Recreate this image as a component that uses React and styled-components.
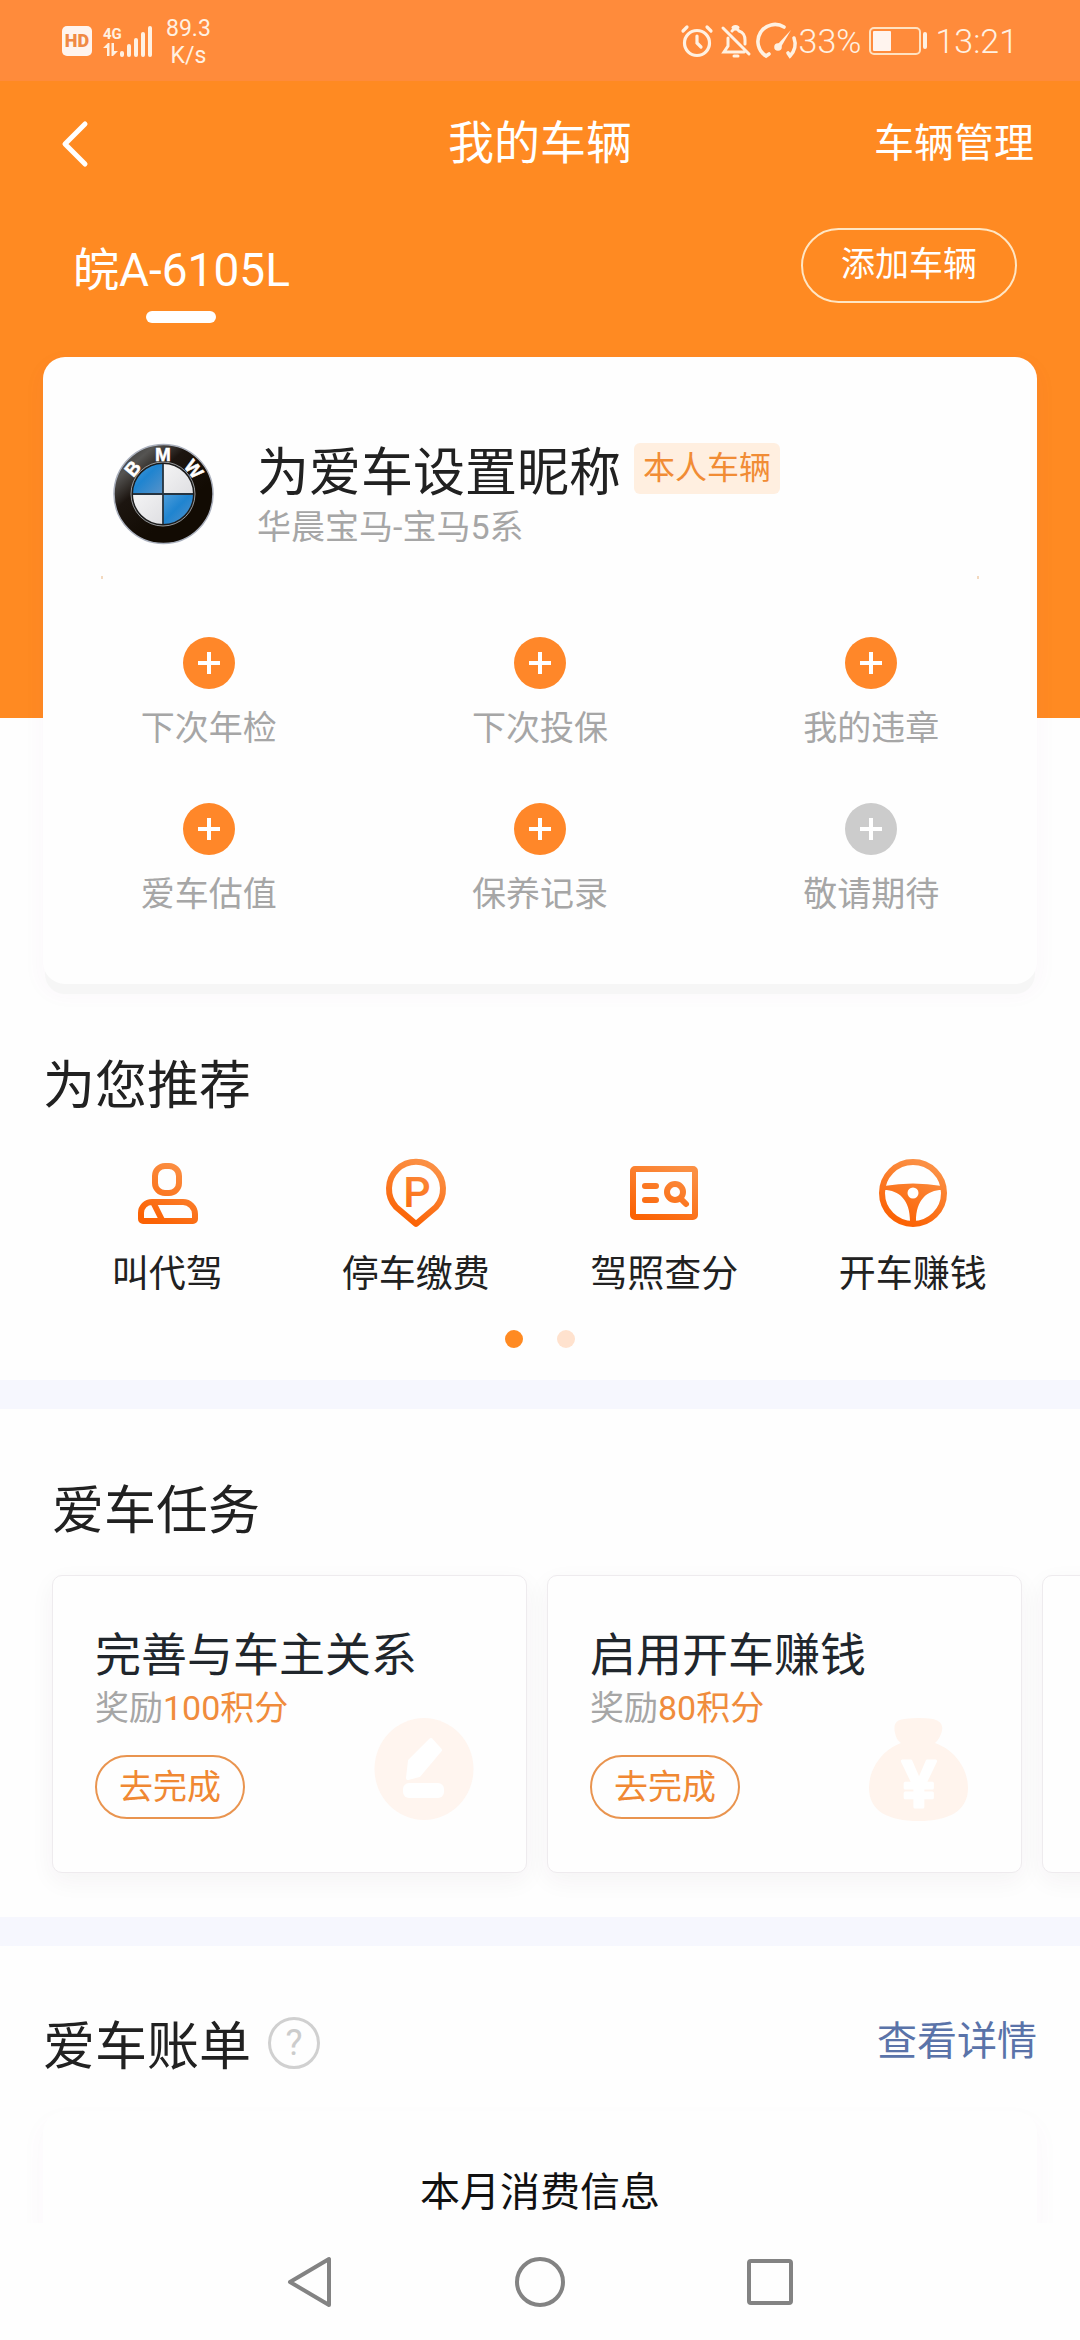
import React from 'react';
import styled, { createGlobalStyle } from 'styled-components';

const vehicleItems = [
  { label: '下次年检' },
  { label: '下次投保' },
  { label: '我的违章' },
  { label: '爱车估值' },
  { label: '保养记录' },
  { label: '敬请期待', disabled: true },
];

const services = [
  { label: '叫代驾', icon: 'driver' },
  { label: '停车缴费', icon: 'parking' },
  { label: '驾照查分', icon: 'license' },
  { label: '开车赚钱', icon: 'wheel' },
];

const tasks = [
  { title: '完善与车主关系', reward: '100积分', icon: 'edit' },
  { title: '启用开车赚钱', reward: '80积分', icon: 'money' },
];

const SignalIcon = () => (
  <svg width="52" height="34" viewBox="0 0 52 34" fill="#fff1e2">
    <text x="0" y="15" fontFamily="Roboto" fontWeight="700" fontSize="15">
      4G
    </text>
    <path d="M0 24l5-5h1.500v13H4v-8zM15 27l-5 5H8.500V19H11v8z" />
    <rect x="17" y="27" width="4" height="6" rx="2" />
    <rect x="24" y="20" width="4" height="13" rx="2" />
    <rect x="31" y="14" width="4" height="19" rx="2" />
    <rect x="38" y="8" width="4" height="25" rx="2" />
    <rect x="45" y="2" width="4" height="31" rx="2" />
  </svg>
);

const AlarmIcon = () => (
  <svg width="32" height="34" viewBox="0 0 32 34" fill="none" stroke="#fff1e2" strokeWidth="3.200" strokeLinecap="round">
    <circle cx="16" cy="19" r="12.500" />
    <path d="M16 12v7l4 4M2 7l4-4M30 7l-4-4" />
  </svg>
);

const MuteIcon = () => (
  <svg width="30" height="34" viewBox="0 0 30 34" fill="none" stroke="#fff1e2" strokeWidth="3" strokeLinecap="round">
    <path d="M2 4l26 26M7 14v8l-4 6h20" />
    <path d="M11 7a4 4 0 0 1 7 0c4 1 6 5 6 9v4M12 3.500a4 4 0 0 1 5 0" />
    <path d="M13 32h4" />
  </svg>
);

const GaugeIcon = () => (
  <svg width="40" height="36" viewBox="0 0 40 36" fill="none" stroke="#fff1e2" strokeWidth="3.600" strokeLinecap="round">
    <path d="M10 31l-3 2A17 17 0 0 1 25 4" />
    <path d="M35 15a17 17 0 0 1-4 18l-2-3" />
    <path d="M32 7L22 24l-4-2z" fill="#fff1e2" stroke="none" />
    <circle cx="19" cy="24" r="2" fill="#fff1e2" />
  </svg>
);

const BatteryIcon = () => (
  <svg width="58" height="28" viewBox="0 0 58 28" fill="none">
    <rect x="1" y="1" width="50" height="26" rx="4" stroke="#ffe2c2" strokeWidth="2" />
    <rect x="4" y="4" width="18" height="20" rx="1" fill="#fff4ee" />
    <rect x="54" y="5" width="4" height="17" rx="2" fill="#fff1e2" />
  </svg>
);

const BrandLogo = () => (
  <svg width="101" height="102" viewBox="0 0 101 102">
    <defs>
      <linearGradient id="ring" x1="0" y1="0" x2="0.600" y2="0.700">
        <stop offset="0" stopColor="#2a2a2a" />
        <stop offset="0.300" stopColor="#555452" />
        <stop offset="0.550" stopColor="#1c1510" />
        <stop offset="1" stopColor="#120b03" />
      </linearGradient>
      <linearGradient id="blue" x1="0" y1="0" x2="1" y2="1">
        <stop offset="0" stopColor="#4f9edb" />
        <stop offset="0.450" stopColor="#1f84d0" />
        <stop offset="1" stopColor="#5a93c8" />
      </linearGradient>
      <linearGradient id="silver" x1="0" y1="0" x2="1" y2="1">
        <stop offset="0" stopColor="#ffffff" />
        <stop offset="1" stopColor="#d4d4d8" />
      </linearGradient>
    </defs>
    <circle cx="50.500" cy="51" r="49.500" fill="url(#ring)" stroke="#aab0bd" strokeWidth="1.500" />
    <circle cx="50" cy="51" r="31" fill="url(#silver)" />
    <path d="M50 51V20A31 31 0 0 0 19 51z" fill="url(#blue)" />
    <path d="M50 51v31a31 31 0 0 0 31-31z" fill="url(#blue)" />
    <path d="M50 20v62M19 51h62" stroke="#26333f" strokeWidth="1.800" />
    <circle cx="50" cy="51" r="31" fill="none" stroke="#1b1b1b" strokeWidth="2" />
    <circle cx="50" cy="51" r="32" fill="none" stroke="#b9bcc0" strokeWidth="0.800" />
    <g
      fill="#fff"
      stroke="#fff"
      strokeWidth="0.500"
      fontFamily="Liberation Sans"
      fontWeight="700"
      fontSize="19"
      textAnchor="middle"
    >
      <text x="50" y="18" transform="rotate(-50 50 51)">B</text>
      <text x="50" y="18">M</text>
      <text x="50" y="18" transform="rotate(51 50 51)">W</text>
    </g>
  </svg>
);

const PlusIcon = () => (
  <svg width="24" height="24" viewBox="0 0 24 24" stroke="#fff" strokeWidth="4">
    <path d="M12 1v22M1 12h22" />
  </svg>
);

const ServiceIcon = ({ name }) => {
  const paint = `url(#${name}-fill)`;
  return (
    <svg width="72" height="72" viewBox="0 0 72 72" fill="none" stroke={paint} strokeWidth="6" strokeLinecap="round" strokeLinejoin="round">
      <defs>
        <linearGradient id={`${name}-fill`} gradientUnits="userSpaceOnUse" x1="22" y1="64" x2="48" y2="8">
          <stop offset="0" stopColor="#fb6204" />
          <stop offset="1" stopColor="#fb8f43" />
        </linearGradient>
      </defs>
      {name === 'driver' && (
        <>
          <rect x="24" y="9" width="24" height="27" rx="10" />
          <path d="M21 45h31a12 12 0 0 1 12 12v5a2 2 0 0 1-2 2H12a2 2 0 0 1-2-2v-6a11 11 0 0 1 11-11z" />
          <path d="M23 47l8 16" />
        </>
      )}
      {name === 'parking' && (
        <>
          <path d="M36 67L16 50a27 27 0 1 1 40 0z" />
          <text x="37" y="50" fontFamily="Roboto" fontWeight="500" fontSize="43" textAnchor="middle" fill={paint} stroke="none">
            P
          </text>
        </>
      )}
      {name === 'license' && (
        <>
          <rect x="5" y="12" width="62" height="48" rx="2" />
          <path d="M17 29h11M17 43h11M53 42l5 5" />
          <circle cx="47" cy="35" r="8" />
        </>
      )}
      {name === 'wheel' && (
        <>
          <circle cx="36" cy="36" r="31" />
          <path d="M7 29q29-5 58 0v4C50 33 39 43 39 64h-6C33 43 22 33 7 33z" fill={paint} stroke="none" />
          <circle cx="36" cy="36" r="5.500" fill="#fff" stroke="none" />
        </>
      )}
    </svg>
  );
};

const TaskIcon = ({ name }) => (
  <svg width="100" height="103" viewBox="0 0 100 103">
    {name === 'edit' ? (
      <>
        <ellipse cx="50" cy="51" rx="49.500" ry="51" fill="#fff5ef" />
        <path
          d="M57 22l9 10-21 25-11 3 2-17z"
          fill="#fff"
          stroke="#fff"
          strokeWidth="4"
          strokeLinejoin="round"
        />
        <rect x="29" y="65" width="41" height="15" rx="6" fill="#fff" />
      </>
    ) : (
      <>
        <path
          d="M35 1c10-1.500 20-1.500 29 0 9 2 11 8 8 15-2 5-4 7-6 9 20 7 33 26 33 45 0 23-19 33-49.500 33S0 93 0 70c0-19 13-38 32-45-3-2-5-5-6-10C24 6 27 2 35 1z"
          fill="#fff4ed"
        />
        <text x="50" y="89" fontFamily="Roboto" fontWeight="500" fontSize="64" textAnchor="middle" fill="#fff" stroke="#fff" strokeWidth="3" strokeLinejoin="round">
          ¥
        </text>
      </>
    )}
  </svg>
);

const App = () => {
  return (
    <>
      <GlobalStyle />
      <Page>
        <StatusBar>
          <StatusGroup>
            <HdBadge>HD</HdBadge>
            <SignalIcon />
            <NetSpeed>
              <span>89.3</span>
              <span>K/s</span>
            </NetSpeed>
          </StatusGroup>
          <StatusGroup $end>
            <AlarmIcon />
            <MuteIcon />
            <PowerInfo>
              <GaugeIcon />
              <StatusText>33%</StatusText>
            </PowerInfo>
            <BatteryIcon />
            <StatusText>13:21</StatusText>
          </StatusGroup>
        </StatusBar>

        <Header>
          <TitleBar>
            <BackButton type="button" aria-label="返回">
              <svg width="26" height="46" viewBox="0 0 26 46" fill="none" stroke="#fff" strokeWidth="5" strokeLinecap="round" strokeLinejoin="round">
                <path d="M23 3L3 23l20 20" />
              </svg>
            </BackButton>
            <PageTitle>我的车辆</PageTitle>
            <ManageLink href="#manage">车辆管理</ManageLink>
          </TitleBar>
          <PlateRow>
            <PlateTab type="button">皖A-6105L</PlateTab>
            <AddButton type="button">添加车辆</AddButton>
          </PlateRow>
        </Header>

        <VehicleCard>
          <VehicleInfo>
            <BrandLogo />
            <div>
              <NameRow>
                <Nickname>为爱车设置昵称</Nickname>
                <OwnerTag>本人车辆</OwnerTag>
              </NameRow>
              <Model>华晨宝马-宝马5系</Model>
            </div>
          </VehicleInfo>
          <Divider />
          <VehicleGrid>
            {vehicleItems.map((item) => (
              <VehicleItem key={item.label} type="button" disabled={item.disabled}>
                <PlusCircle $disabled={item.disabled}>
                  <PlusIcon />
                </PlusCircle>
                {item.label}
              </VehicleItem>
            ))}
          </VehicleGrid>
        </VehicleCard>

        <Recommend>
          <SectionTitle>为您推荐</SectionTitle>
          <ServiceRow>
            {services.map((item) => (
              <Service key={item.icon} href={`#${item.icon}`}>
                <ServiceIcon name={item.icon} />
                {item.label}
              </Service>
            ))}
          </ServiceRow>
          <Dots>
            <Dot $active />
            <Dot />
          </Dots>
        </Recommend>

        <Band />

        <Tasks>
          <SectionTitle>爱车任务</SectionTitle>
          <TaskList>
            {tasks.map((task) => (
              <TaskCard key={task.icon}>
                <TaskTitle>{task.title}</TaskTitle>
                <Reward>
                  奖励<em>{task.reward}</em>
                </Reward>
                <TaskFoot>
                  <TaskButton type="button">去完成</TaskButton>
                  <TaskIcon name={task.icon} />
                </TaskFoot>
              </TaskCard>
            ))}
            <TaskCard />
          </TaskList>
        </Tasks>

        <Band />

        <Bill>
          <BillHead>
            <SectionTitle>爱车账单</SectionTitle>
            <HelpButton type="button" aria-label="账单说明">
              ?
            </HelpButton>
            <DetailLink href="#bill">查看详情</DetailLink>
          </BillHead>
          <BillCard>本月消费信息</BillCard>
        </Bill>

        <SystemNav>
          <NavButton type="button" aria-label="后退">
            <svg width="48" height="52" viewBox="0 0 48 52">
              <path d="M43 3v46L4 26z" />
            </svg>
          </NavButton>
          <NavButton type="button" aria-label="主屏幕">
            <svg width="52" height="52" viewBox="0 0 52 52">
              <circle cx="26" cy="26" r="23" />
            </svg>
          </NavButton>
          <NavButton type="button" aria-label="最近任务">
            <svg width="48" height="48" viewBox="0 0 48 48">
              <rect x="3" y="3" width="42" height="42" rx="2" />
            </svg>
          </NavButton>
        </SystemNav>
      </Page>
    </>
  );
};

const GlobalStyle = createGlobalStyle`
  * {
    box-sizing: border-box;
    margin: 0;
    padding: 0;
  }

  body {
    background: #fefefe;
    color: #212121;
    font-family: Roboto, 'Noto Sans CJK SC', sans-serif;
    font-weight: 400;
  }

  button {
    border: none;
    background: none;
    color: inherit;
    font: inherit;
    cursor: pointer;
  }

  a {
    color: inherit;
    text-decoration: none;
  }

  svg {
    display: block;
    flex-shrink: 0;
    overflow: visible;
  }
`;

const Page = styled.div`
  min-height: 100vh;
  display: flex;
  flex-direction: column;
  overflow: hidden;
`;

const StatusBar = styled.div`
  height: 81px;
  padding: 0 62px;
  display: flex;
  justify-content: space-between;
  align-items: center;
  background: #ff8b3b;
  color: #fff1e2;
`;

const StatusGroup = styled.div`
  display: flex;
  align-items: center;
  gap: ${({ $end }) => ($end ? '8px' : '11px')};
`;

const HdBadge = styled.span`
  width: 30px;
  height: 30px;
  border-radius: 5px;
  background: #fff4ee;
  color: #f08a45;
  font-size: 18px;
  font-weight: 900;
  line-height: 30px;
  text-align: center;
`;

const NetSpeed = styled.div`
  padding-top: 2px;
  display: flex;
  flex-direction: column;
  align-items: center;
  font-size: 23px;
  line-height: 27px;
`;

const PowerInfo = styled.div`
  display: flex;
  align-items: center;
`;

const StatusText = styled.span`
  font-size: 34px;
  font-weight: 300;
  line-height: 40px;
`;

const Header = styled.header`
  padding-bottom: 395px;
  background: #ff8a22;
  color: #fff;
`;

const TitleBar = styled.div`
  height: 124px;
  padding: 0 46px;
  display: grid;
  grid-template-columns: 1fr auto 1fr;
  align-items: center;
`;

const BackButton = styled.button`
  justify-self: start;
  padding: 2px 16px 0;
`;

const PageTitle = styled.h1`
  font-size: 46px;
  font-weight: 400;
  line-height: 56px;
`;

const ManageLink = styled.a`
  justify-self: end;
  padding-top: 2px;
  font-size: 40px;
  line-height: 50px;
`;

const PlateRow = styled.div`
  padding: 23px 63px 0 73px;
  display: flex;
  justify-content: space-between;
  align-items: flex-start;
`;

const PlateTab = styled.button`
  padding-top: 14px;
  font-size: 46px;
  line-height: 56px;

  &::after {
    content: '';
    display: block;
    width: 70px;
    height: 12px;
    margin: 13px auto 0;
    border-radius: 6px;
    background: #fff;
  }
`;

const AddButton = styled.button`
  padding: 0 38px 2px;
  border: 2px solid #ffe6c4;
  border-radius: 38px;
  font-size: 34px;
  line-height: 69px;
`;

const VehicleCard = styled.section`
  position: relative;
  margin: -361px 43px 0;
  padding: 86px 0 70px;
  border-radius: 22px;
  background: #fefefe;
  box-shadow: 0 12px 0 -2px #f6f6f6, 0 8px 20px 4px rgba(150, 60, 150, 0.03);
`;

const VehicleInfo = styled.div`
  padding: 0 70px;
  display: flex;
  align-items: flex-start;
  gap: 43px;
`;

const NameRow = styled.div`
  display: flex;
  align-items: flex-start;
  gap: 13px;
`;

const Nickname = styled.h2`
  font-size: 52px;
  font-weight: 400;
  line-height: 62px;
`;

const OwnerTag = styled.span`
  padding: 0 9px;
  border-radius: 6px;
  background: #ffefe0;
  color: #f18c35;
  font-size: 32px;
  line-height: 51px;
`;

const Model = styled.p`
  margin-top: 2px;
  color: #a6a6a6;
  font-size: 34px;
  line-height: 40px;
`;

const Divider = styled.div`
  height: 3px;
  margin: 29px 58px 58px;
  border: solid #f3d9bf;
  border-width: 0 2px;
`;

const VehicleGrid = styled.div`
  display: grid;
  grid-template-columns: repeat(3, 1fr);
  row-gap: 55px;
`;

const VehicleItem = styled.button`
  display: flex;
  flex-direction: column;
  align-items: center;
  gap: 19px;
  color: #a6a6a6;
  font-size: 34px;
  line-height: 40px;
`;

const PlusCircle = styled.span`
  width: 52px;
  height: 52px;
  display: flex;
  align-items: center;
  justify-content: center;
  border-radius: 50%;
  background: ${({ $disabled }) => ($disabled ? '#cccccc' : '#ff8729')};
`;

const SectionTitle = styled.h2`
  font-size: 52px;
  font-weight: 400;
  line-height: 62px;
`;

const Recommend = styled.section`
  padding: 72px 43px 32px;
`;

const ServiceRow = styled.div`
  margin-top: 39px;
  display: grid;
  grid-template-columns: repeat(4, 1fr);
`;

const Service = styled.a`
  display: flex;
  flex-direction: column;
  align-items: center;
  gap: 24px;
  font-size: 37px;
  line-height: 44px;
`;

const Dots = styled.div`
  margin-top: 33px;
  display: flex;
  justify-content: center;
  gap: 34px;
`;

const Dot = styled.span`
  width: 18px;
  height: 18px;
  border-radius: 50%;
  background: ${({ $active }) => ($active ? '#ff8a22' : '#ffe2ce')};
`;

const Band = styled.div`
  height: 29px;
  background: #f6f7fe;
`;

const Tasks = styled.section`
  padding: 72px 0 0 52px;
`;

const TaskList = styled.div`
  margin-left: -52px;
  padding: 32px 0 44px 52px;
  display: flex;
  gap: 20px;
  overflow: hidden;
`;

const TaskCard = styled.article`
  flex: 0 0 475px;
  padding: 51px 52px 53px 42px;
  border: 1px solid #eeebee;
  border-radius: 10px;
  background: #fefefe;
  box-shadow: 0 8px 24px rgba(60, 40, 60, 0.05);
`;

const TaskTitle = styled.h3`
  color: #20262c;
  font-size: 46px;
  font-weight: 400;
  line-height: 56px;
`;

const Reward = styled.p`
  margin-top: 5px;
  color: #a6a6a6;
  font-size: 34px;
  line-height: 40px;

  em {
    color: #f08c3c;
    font-style: normal;
  }
`;

const TaskFoot = styled.div`
  margin-top: 27px;
  display: flex;
  justify-content: space-between;
  align-items: flex-end;

  svg {
    margin: -40px 0 -2px;
  }
`;

const TaskButton = styled.button`
  padding: 0 22px;
  border: 2px solid #e9944f;
  border-radius: 32px;
  color: #f08833;
  font-size: 34px;
  line-height: 60px;
`;

const Bill = styled.section`
  padding: 71px 43px 0;
  overflow: hidden;
`;

const BillHead = styled.div`
  display: flex;
  align-items: flex-start;
  gap: 17px;
`;

const HelpButton = styled.button`
  width: 52px;
  height: 52px;
  border: 3px solid #d0d0d0;
  border-radius: 50%;
  color: #cccccc;
  font-size: 36px;
  line-height: 46px;
`;

const DetailLink = styled.a`
  margin-left: auto;
  color: #5a73a9;
  font-size: 40px;
  line-height: 50px;
`;

const BillCard = styled.div`
  margin-top: 32px;
  padding: 57px 0 5px;
  border-radius: 22px 22px 0 0;
  background: #fefefe;
  box-shadow: 0 12px 20px 8px rgba(150, 60, 150, 0.02);
  color: #111111;
  font-size: 40px;
  line-height: 50px;
  text-align: center;
`;

const SystemNav = styled.nav`
  flex: 1;
  min-height: 116px;
  padding: 0 18%;
  display: grid;
  grid-template-columns: repeat(3, 1fr);
  align-items: center;
  background: #fefefe;
`;

const NavButton = styled.button`
  display: flex;
  justify-content: center;

  svg {
    fill: none;
    stroke: #838383;
    stroke-width: 4;
    stroke-linejoin: round;
  }
`;

export default App;
